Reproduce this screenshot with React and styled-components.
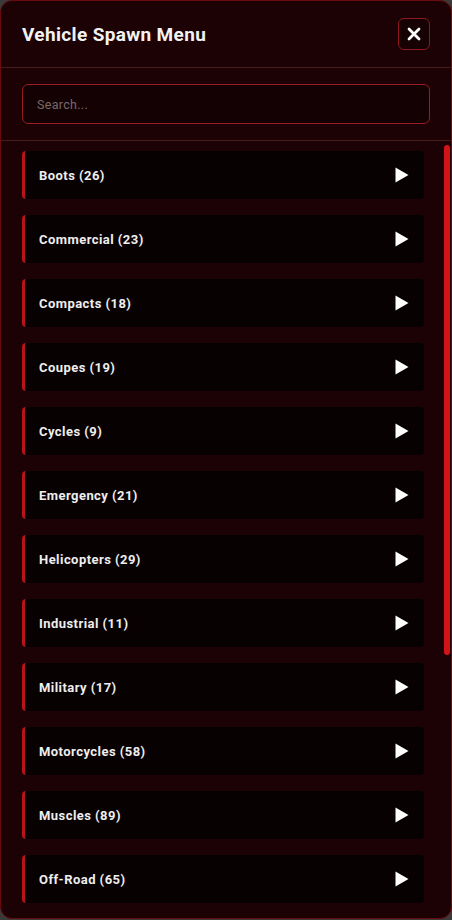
import React, { useState } from 'react';
import styled, { createGlobalStyle } from 'styled-components';

const categories = [
    ['Boots', 26],
    ['Commercial', 23],
    ['Compacts', 18],
    ['Coupes', 19],
    ['Cycles', 9],
    ['Emergency', 21],
    ['Helicopters', 29],
    ['Industrial', 11],
    ['Military', 17],
    ['Motorcycles', 58],
    ['Muscles', 89],
    ['Off-Road', 65],
];

export default function App() {
    const [search, setSearch] = useState('');
    const list = categories.filter(([name]) => name.toLowerCase().includes(search.toLowerCase()));

    return (
        <>
            <GlobalStyle />
            <Panel>
                <Header>
                    <Title>Vehicle Spawn Menu</Title>
                    <CloseButton aria-label="Close">
                        <svg width="14" height="14" viewBox="0 0 14 14">
                            <path d="M2 2 L12 12 M12 2 L2 12" stroke="#fff" strokeWidth="2.8" strokeLinecap="round" />
                        </svg>
                    </CloseButton>
                </Header>

                <SearchBar>
                    <SearchInput
                        placeholder="Search..."
                        value={search}
                        onChange={(e) => setSearch(e.target.value)}
                    />
                </SearchBar>

                <ListWrap>
                    <List>
                        {list.map(([name, count]) => (
                            <Item key={name}>
                                <ItemText>
                                    {name} ({count})
                                </ItemText>
                                <svg width="14" height="16" viewBox="0 0 14 16">
                                    <path d="M0.5 0.5 L13.5 8 L0.5 15.5 Z" fill="#fff" />
                                </svg>
                            </Item>
                        ))}
                    </List>
                    <ScrollThumb />
                </ListWrap>
            </Panel>
        </>
    );
}

const GlobalStyle = createGlobalStyle`
    html, body {
        margin: 0;
        padding: 0;
        background: #3a3a3a;
        font-family: Roboto, "Liberation Sans", sans-serif;
    }
`;

const Panel = styled.div`
    width: 452px;
    height: 919px;
    box-sizing: border-box;

    display: flex;
    flex-direction: column;

    background: #1c0204;
    border: 1px solid #6a0c0f;
    border-radius: 12px;
    overflow: hidden;
`;

const Header = styled.div`
    height: 66px;
    padding: 0 21px;
    flex-shrink: 0;

    display: flex;
    align-items: center;
    justify-content: space-between;

    border-bottom: 1px solid #4a1a1c;
`;

const Title = styled.h1`
    margin: 0;

    color: #f2f2f2;
    font-size: 19px;
    font-weight: 700;
    letter-spacing: 0.35px;
`;

const CloseButton = styled.button`
    width: 32px;
    height: 32px;
    padding: 0;

    display: flex;
    align-items: center;
    justify-content: center;

    background: #160103;
    border: 1px solid #8c1a1e;
    border-radius: 6px;
    cursor: pointer;
`;

const SearchBar = styled.div`
    padding: 16px 21px;
    flex-shrink: 0;
    border-bottom: 1px solid #4a1a1c;
`;

const SearchInput = styled.input`
    width: 100%;
    height: 40px;
    box-sizing: border-box;
    padding: 0 14px;

    background: #140103;
    border: 1px solid #9a1c20;
    border-radius: 6px;
    outline: none;

    color: #ddd;
    font-family: inherit;
    font-size: 12.5px;
    letter-spacing: 0.3px;

    &::placeholder {
        color: #7a6a6b;
    }
`;

const ListWrap = styled.div`
    flex: 1;
    min-height: 0;
    position: relative;
`;

const List = styled.div`
    height: 100%;
    box-sizing: border-box;
    padding: 10px 27px 10px 21px;

    display: flex;
    flex-direction: column;
    gap: 16px;

    overflow: hidden;
`;

const ScrollThumb = styled.div`
    width: 6px;
    height: 510px;

    position: absolute;
    top: 4px;
    right: 1px;

    background: #d0141a;
    border-radius: 3px;
`;

const Item = styled.div`
    height: 48px;
    flex-shrink: 0;
    padding: 0 15px 0 14px;

    display: flex;
    align-items: center;
    justify-content: space-between;

    background: #080102;
    border-left: 3px solid #b8121a;
    border-radius: 4px;
    cursor: pointer;
`;

const ItemText = styled.span`
    color: #eeeeee;
    font-size: 13px;
    font-weight: 700;
    letter-spacing: 0.45px;
`;
